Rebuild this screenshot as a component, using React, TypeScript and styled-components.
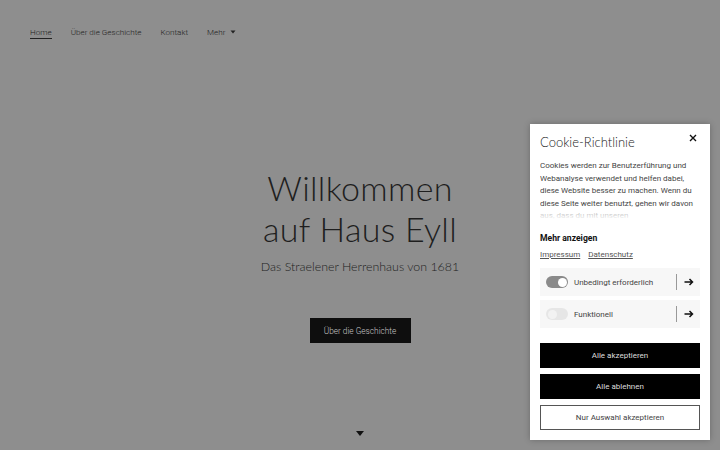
import styled, { createGlobalStyle } from "styled-components";

const GlobalStyle = createGlobalStyle`
  html, body {
    margin: 0;
    padding: 0;
    background: #8e8e8e;
  }
  * { box-sizing: border-box; }
`;

function App() {
  return (
    <>
      <GlobalStyle />
      <Page>
        <Nav>
          <NavItem $active>Home</NavItem>
          <NavItem>Über die Geschichte</NavItem>
          <NavItem>Kontakt</NavItem>
          <NavItem>
            Mehr <Caret />
          </NavItem>
        </Nav>
        <Hero>
          <Title>
            Willkommen
            <br />
            auf Haus Eyll
          </Title>
          <Subtitle>Das Straelener Herrenhaus von 1681</Subtitle>
          <HeroButton>Über die Geschichte</HeroButton>
        </Hero>
        <ScrollDown />

        <Panel>
          <PanelHead>
            <PanelTitle>Cookie-Richtlinie</PanelTitle>
            <Close>
              <svg width="8" height="8" viewBox="0 0 8 8">
                <path d="M1 1L7 7M7 1L1 7" stroke="#111" strokeWidth="1.4" />
              </svg>
            </Close>
          </PanelHead>
          <BodyText>
            Cookies werden zur Benutzerführung und Webanalyse verwendet und
            helfen dabei, diese Website besser zu machen. Wenn du diese Seite
            weiter benutzt, gehen wir davon aus, dass du mit unseren
          </BodyText>
          <More>Mehr anzeigen</More>
          <Links>
            <LinkText>Impressum</LinkText>
            <LinkText>Datenschutz</LinkText>
          </Links>
          <Option>
            <Toggle $on />
            <OptionLabel>Unbedingt erforderlich</OptionLabel>
            <Arrow />
          </Option>
          <Option>
            <Toggle />
            <OptionLabel>Funktionell</OptionLabel>
            <Arrow />
          </Option>
          <Actions>
            <ActionButton>Alle akzeptieren</ActionButton>
            <ActionButton>Alle ablehnen</ActionButton>
            <ActionButton $outline>Nur Auswahl akzeptieren</ActionButton>
          </Actions>
        </Panel>
      </Page>
    </>
  );
}

function Caret() {
  return (
    <svg width="6" height="4" viewBox="0 0 6 4" style={{ marginLeft: 5 }}>
      <path d="M0.5 0.5H5.5L3 3.5Z" fill="#222" />
    </svg>
  );
}

function ScrollDown() {
  return (
    <ScrollArrow>
      <svg width="8" height="5" viewBox="0 0 8 5">
        <path d="M0 0H8L4 5Z" fill="#111" />
      </svg>
    </ScrollArrow>
  );
}

function Arrow() {
  return (
    <ArrowBox>
      <svg width="10" height="8" viewBox="0 0 10 8">
        <path
          d="M0.5 4H8.5M5.5 1L8.5 4L5.5 7"
          stroke="#111"
          strokeWidth="1.5"
          fill="none"
        />
      </svg>
    </ArrowBox>
  );
}

export default App;

const Page = styled.div`
  position: relative;
  width: 720px;
  height: 450px;
  overflow: hidden;
  background: #8e8e8e;
  font-family: Roboto, "Liberation Sans", sans-serif;
  display: flex;
  flex-direction: column;
`;

const Nav = styled.nav`
  display: flex;
  gap: 19px;
  padding: 26px 0 0 30px;
  height: 50px;
`;

const NavItem = styled.span<{ $active?: boolean }>`
  display: inline-flex;
  align-items: center;
  height: 13px;
  font-size: 8.1px;
  font-weight: 300;
  color: #222;
  border-bottom: 1px solid ${(p) => (p.$active ? "#222" : "transparent")};
  padding-bottom: 1px;
`;

const Hero = styled.div`
  display: flex;
  flex-direction: column;
  align-items: center;
  padding-top: 117px;
`;

const Title = styled.h1`
  margin: 0;
  font-family: Lato, "Open Sans", sans-serif;
  font-weight: 300;
  font-size: 34px;
  line-height: 41px;
  color: #1e1e1e;
  text-align: center;
  letter-spacing: 0.3px;
`;

const Subtitle = styled.p`
  margin: 10px 0 0;
  font-family: Lato, "Open Sans", sans-serif;
  font-weight: 300;
  font-size: 12.4px;
  color: #222;
`;

const HeroButton = styled.div`
  margin-top: 44px;
  width: 101px;
  height: 25px;
  background: #0e0e0e;
  color: #c8c8c8;
  font-size: 8.3px;
  font-weight: 300;
  display: flex;
  align-items: center;
  justify-content: center;
`;

const ScrollArrow = styled.div`
  position: absolute;
  left: 356px;
  top: 431px;
  line-height: 0;
`;

const Panel = styled.div`
  position: absolute;
  right: 10px;
  top: 124px;
  width: 180px;
  height: 316px;
  background: #fff;
  box-shadow: 0 0 6px rgba(0, 0, 0, 0.25);
  padding: 10px;
  display: flex;
  flex-direction: column;
`;

const PanelHead = styled.div`
  display: flex;
  justify-content: space-between;
  align-items: flex-start;
`;

const PanelTitle = styled.div`
  font-family: Lato, "Open Sans", sans-serif;
  font-weight: 300;
  font-size: 13px;
  line-height: 16px;
  color: #222;
`;

const Close = styled.div`
  line-height: 0;
  margin: 0 3px 0 0;
`;

const BodyText = styled.div`
  position: relative;
  margin-top: 10px;
  height: 60px;
  overflow: hidden;
  font-size: 8px;
  line-height: 12.5px;
  color: #444;

  &::after {
    content: "";
    position: absolute;
    left: 0;
    right: 0;
    bottom: 0;
    height: 14px;
    background: linear-gradient(rgba(255, 255, 255, 0.3), #fff);
  }
`;

const More = styled.div`
  margin-top: 12px;
  font-size: 8.6px;
  line-height: 12px;
  font-weight: 700;
  color: #111;
`;

const Links = styled.div`
  display: flex;
  gap: 8px;
  margin-top: 5px;
  line-height: 12px;
`;

const LinkText = styled.span`
  font-size: 8px;
  color: #555;
  text-decoration: underline;
`;

const Option = styled.div`
  margin-top: 7px;
  height: 28px;
  background: #f7f7f7;
  display: flex;
  align-items: center;
  padding-left: 6px;
  & + & {
    margin-top: 4px;
  }
`;

const Toggle = styled.span<{ $on?: boolean }>`
  position: relative;
  width: 22px;
  height: 12px;
  border-radius: 6px;
  background: ${(p) => (p.$on ? "#8a8a8a" : "#e6e6e6")};
  flex-shrink: 0;

  &::after {
    content: "";
    position: absolute;
    top: 1.5px;
    left: ${(p) => (p.$on ? "11.5px" : "1.5px")};
    width: 9px;
    height: 9px;
    border-radius: 50%;
    background: ${(p) => (p.$on ? "#fff" : "#f2f2f2")};
  }
`;

const OptionLabel = styled.span`
  flex: 1;
  margin-left: 6px;
  font-size: 8px;
  color: #444;
`;

const ArrowBox = styled.span`
  width: 24px;
  height: 16px;
  border-left: 1px solid #999;
  display: flex;
  align-items: center;
  justify-content: center;
  line-height: 0;
`;

const Actions = styled.div`
  display: flex;
  flex-direction: column;
  gap: 6px;
  margin-top: 15px;
`;

const ActionButton = styled.div<{ $outline?: boolean }>`
  height: 25px;
  display: flex;
  align-items: center;
  justify-content: center;
  font-size: 8px;
  background: ${(p) => (p.$outline ? "#fff" : "#000")};
  color: ${(p) => (p.$outline ? "#444" : "#ddd")};
  border: 1px solid ${(p) => (p.$outline ? "#555" : "#000")};
`;
